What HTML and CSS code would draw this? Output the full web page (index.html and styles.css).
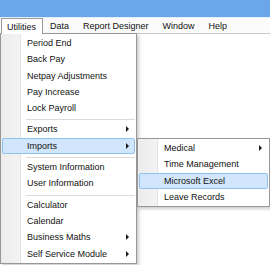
FILE: index.html
```html
<!DOCTYPE html>
<html lang="en">
<head>
  <meta charset="UTF-8" />
  <title>Payroll</title>
  <link rel="stylesheet" href="styles.css">
</head>
<body>
<div class="window">
  <div class="title-bar"></div>
  <div class="menu-bar">
    <span class="menu-title open">Utilities</span>
    <span class="menu-title">Data</span>
    <span class="menu-title">Report Designer</span>
    <span class="menu-title">Window</span>
    <span class="menu-title">Help</span>
  </div>
  <div class="workspace">
    <ul class="dropdown main-menu">
      <li>Period End</li>
      <li>Back Pay</li>
      <li>Netpay Adjustments</li>
      <li>Pay Increase</li>
      <li>Lock Payroll</li>
      <li class="sep"></li>
      <li class="sub">Exports</li>
      <li class="sub active">Imports</li>
      <li class="sep"></li>
      <li>System Information</li>
      <li>User Information</li>
      <li class="sep"></li>
      <li>Calculator</li>
      <li>Calendar</li>
      <li class="sub">Business Maths</li>
      <li class="sub">Self Service Module</li>
    </ul>
    <ul class="dropdown sub-menu">
      <li class="sub">Medical</li>
      <li>Time Management</li>
      <li class="active">Microsoft Excel</li>
      <li>Leave Records</li>
    </ul>
  </div>
</div>
</body>
</html>
```

FILE: styles.css
```css
body {
  margin: 0;
  font-family: 'Liberation Sans', Arial, sans-serif;
  font-size: 9px;
  color: #111111;
  background: #ffffff;
}

.window {
  width: 270px;
  height: 265px;
  overflow: hidden;
  display: flex;
  flex-direction: column;
}

.title-bar {
  height: 17px;
  background-color: #6ba6ea;
  flex-shrink: 0;
}

.menu-bar {
  height: 15px;
  display: flex;
  align-items: stretch;
  background: #fbfbfb;
  border-top: 1px solid #e6eef8;
  border-bottom: 1px solid #c9c9c9;
  flex-shrink: 0;
}

.menu-title {
  display: flex;
  align-items: center;
  padding: 0 6px;
  border: 1px solid transparent;
  border-bottom: none;
}

.menu-title.open {
  position: relative;
  z-index: 2;
  margin-left: 1px;
  margin-bottom: -1px;
  padding-left: 5px;
  padding-right: 6px;
  border-color: #9a9a9a;
  background: #ffffff;
}

.workspace {
  position: relative;
  flex: 1;
  background: #ffffff;
}

.dropdown {
  list-style: none;
  margin: 0;
  padding: 1px;
  position: absolute;
  z-index: 1;
  background: linear-gradient(to right, #ececec 0, #f3f3f3 19px, #e2e3e3 19px, #e2e3e3 20px, #ffffff 20px);
  border: 1px solid #979797;
  box-shadow: 2px 2px 3px rgba(0, 0, 0, 0.2);
}

.main-menu {
  left: 0;
  top: -1px;
  width: 133px;
}

.sub-menu {
  left: 137px;
  top: 104px;
  width: 129px;
}

.dropdown li {
  position: relative;
  height: 14.3px;
  line-height: 14.3px;
  padding-left: 24px;
  border: 1px solid transparent;
  border-radius: 2px;
  white-space: nowrap;
}

.dropdown li.sub::after {
  content: '';
  position: absolute;
  right: 5px;
  top: 4px;
  border-left: 3.5px solid #1a1a1a;
  border-top: 3.5px solid transparent;
  border-bottom: 3.5px solid transparent;
}

.dropdown li.active {
  background: #d1e6fa;
  border-color: #8fc0ee;
}

.dropdown li.sep {
  height: 1px;
  border: none;
  border-radius: 0;
  margin: 3px 0 1px 24px;
  padding: 0;
  background: #dcdcdc;
}
```
